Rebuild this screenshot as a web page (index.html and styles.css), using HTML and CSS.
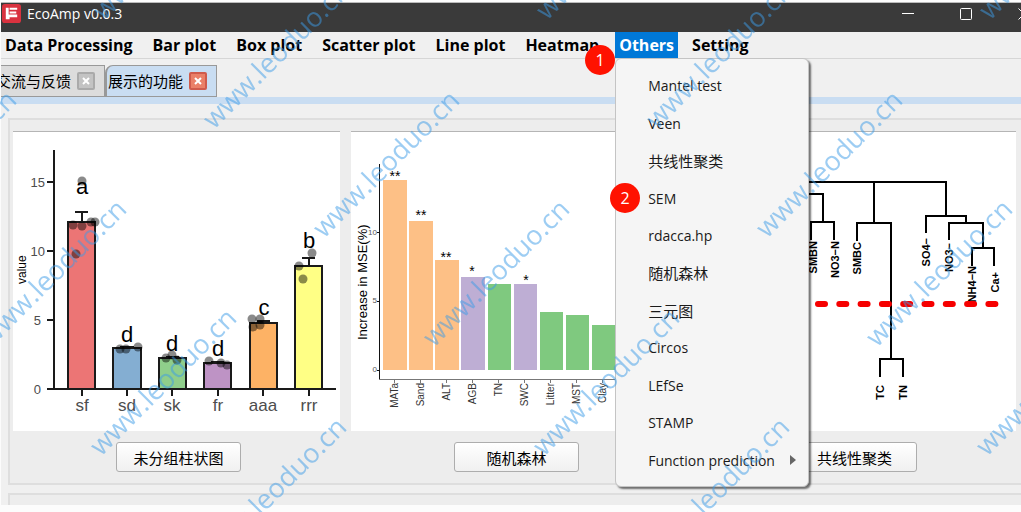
FILE: index.html
```html
<!DOCTYPE html>
<html lang="zh-CN">
<head>
<meta charset="utf-8">
<meta name="viewport" content="width=device-width, initial-scale=1">
<title>EcoAmp v0.0.3</title>
<link rel="stylesheet" href="styles.css">
</head>
<body>
<div class="window">
  <header class="titlebar">
    <svg class="logo" viewBox="0 0 20 20" aria-hidden="true">
      <rect width="20" height="20" rx="3" fill="#d9323f"/>
      <path d="M4 4h3v7h9v3H8v2H4zM8 4h8v2H8zM8 8h7v2H8z" fill="#fff"/>
    </svg>
    <h1 class="title">EcoAmp v0.0.3</h1>
    <div class="controls">
      <button class="control" type="button" aria-label="Minimize"><svg viewBox="0 0 12 12"><path d="M0 5.5h12"/></svg></button>
      <button class="control" type="button" aria-label="Maximize"><svg viewBox="0 0 12 12"><rect x=".5" y=".5" width="11" height="11" rx="1"/></svg></button>
      <button class="control" type="button" aria-label="Close"><svg viewBox="0 0 12 12"><path d="M.5.5l11 11M11.5.5l-11 11"/></svg></button>
    </div>
  </header>

  <nav class="menubar" aria-label="Main menu">
    <button class="menu" type="button">Data Processing</button>
    <button class="menu" type="button">Bar plot</button>
    <button class="menu" type="button">Box plot</button>
    <button class="menu" type="button">Scatter plot</button>
    <button class="menu" type="button">Line plot</button>
    <button class="menu" type="button">Heatmap</button>
    <div class="menu-open">
      <button class="menu active" type="button" aria-haspopup="true" aria-expanded="true">Others</button>
      <span class="badge badge-menu">1</span>
      <div class="dropdown">
        <button class="entry" type="button">Mantel test</button>
        <button class="entry" type="button">Veen</button>
        <button class="entry cjk" type="button">共线性聚类</button>
        <button class="entry" type="button">SEM<span class="badge badge-entry">2</span></button>
        <button class="entry" type="button">rdacca.hp</button>
        <button class="entry cjk" type="button">随机森林</button>
        <button class="entry cjk" type="button">三元图</button>
        <button class="entry" type="button">Circos</button>
        <button class="entry" type="button">LEfSe</button>
        <button class="entry" type="button">STAMP</button>
        <button class="entry" type="button">Function prediction<svg class="arrow" viewBox="0 0 6 10" aria-hidden="true"><path d="M0 0l6 5-6 5z" fill="#666"/></svg></button>
      </div>
    </div>
    <button class="menu" type="button">Setting</button>
  </nav>

  <div class="tabs">
    <div class="tab">
      <button class="tab-label" type="button">交流与反馈</button>
      <button class="tab-close" type="button" aria-label="关闭"><svg viewBox="0 0 8 8"><path d="M1 1l6 6M7 1l-6 6"/></svg></button>
    </div>
    <div class="tab selected">
      <button class="tab-label" type="button">展示的功能</button>
      <button class="tab-close" type="button" aria-label="关闭"><svg viewBox="0 0 8 8"><path d="M1 1l6 6M7 1l-6 6"/></svg></button>
    </div>
  </div>

  <main class="page">
    <section class="group">
      <article class="card">
        <svg class="plot" viewBox="13 132 327 299" role="img" aria-label="未分组柱状图">
          <g stroke="#1a1a1a" stroke-width="2">
            <rect x="68" y="222" width="27" height="167" fill="#ec7575"/>
            <rect x="113" y="348" width="28" height="41" fill="#84aed2"/>
            <rect x="159" y="358" width="27" height="31" fill="#8fce8b"/>
            <rect x="204" y="363" width="27" height="26" fill="#be93c5"/>
            <rect x="250" y="323" width="27" height="66" fill="#fdb265"/>
            <rect x="295" y="266" width="27" height="123" fill="#ffff85"/>
            <path fill="none" d="M75 212h13M82 212v10M120 347h14M166 357h13M211 362h13M257 321h13M302 258h13M309 258v8"/>
            <path fill="none" d="M54 150v240M47 389h289M47 182h7M47 251h7M47 320h7M82 389v7M127 389v7M172 389v7M218 389v7M263 389v7M309 389v7"/>
          </g>
          <g fill="#000" fill-opacity=".46">
            <circle cx="82" cy="181" r="4.5"/><circle cx="91" cy="222" r="4.5"/><circle cx="95" cy="222" r="4.5"/><circle cx="73" cy="225" r="4.5"/><circle cx="82" cy="226" r="4.5"/><circle cx="76" cy="254" r="4.5"/>
            <circle cx="120" cy="349" r="4.5"/><circle cx="126" cy="349" r="4.5"/><circle cx="138" cy="347" r="4.5"/>
            <circle cx="166" cy="358" r="4.5"/><circle cx="172" cy="355" r="4.5"/><circle cx="177" cy="360" r="4.5"/>
            <circle cx="209" cy="361" r="4.5"/><circle cx="221" cy="363" r="4.5"/><circle cx="227" cy="365" r="4.5"/>
            <circle cx="252" cy="319" r="4.5"/><circle cx="260" cy="319" r="4.5"/><circle cx="253" cy="327" r="4.5"/><circle cx="260" cy="325" r="4.5"/>
            <circle cx="312" cy="253" r="4.5"/><circle cx="299" cy="266" r="4.5"/><circle cx="303" cy="279" r="4.5"/>
          </g>
          <g class="letters">
            <text x="82" y="194">a</text><text x="127" y="342">d</text><text x="172" y="351">d</text><text x="218" y="356">d</text><text x="264" y="315">c</text><text x="309" y="248">b</text>
          </g>
          <g class="values">
            <text x="45" y="187">15</text><text x="45" y="256">10</text><text x="41" y="325">5</text><text x="41" y="394">0</text>
          </g>
          <g class="names">
            <text x="82" y="411">sf</text><text x="127" y="411">sd</text><text x="172" y="411">sk</text><text x="218" y="411">fr</text><text x="263" y="411">aaa</text><text x="309" y="411">rrr</text>
          </g>
          <text class="axis-small" transform="translate(26 284) rotate(-90)">value</text>
        </svg>
        <button class="action" type="button">未分组柱状图</button>
      </article>

      <article class="card">
        <svg class="plot" viewBox="351 132 327 299" role="img" aria-label="随机森林">
          <g fill="#fdc086"><rect x="383" y="180" width="24" height="190"/><rect x="409" y="221" width="24" height="149"/><rect x="435" y="260" width="24" height="110"/></g>
          <g fill="#beaed4"><rect x="461" y="277" width="24" height="93"/><rect x="514" y="284" width="23" height="86"/></g>
          <g fill="#7fc97f"><rect x="488" y="284" width="23" height="86"/><rect x="540" y="312" width="23" height="58"/><rect x="566" y="315" width="23" height="55"/><rect x="592" y="325" width="23" height="45"/></g>
          <path d="M379.500 164v216M377 232.500h2M377 301.500h2M377 370.500h2" stroke="#111" fill="none"/>
          <path d="M379 379.500h280M394.500 380v3M420.500 380v3M446.500 380v3M472.500 380v3M498.500 380v3M524.500 380v3M550.500 380v3M576.500 380v3M602.500 380v3" stroke="#777" fill="none"/>
          <g class="stars"><text x="395" y="181">**</text><text x="421" y="220">**</text><text x="446" y="262">**</text><text x="472" y="276">*</text><text x="526" y="285">*</text></g>
          <g class="ticks"><text x="377" y="235">10</text><text x="377" y="303">5</text><text x="377" y="372">0</text></g>
          <g class="species">
            <text transform="translate(398 383) rotate(-90)">MATa</text><text transform="translate(424 383) rotate(-90)">Sand</text><text transform="translate(450 383) rotate(-90)">ALT</text><text transform="translate(476 383) rotate(-90)">AGB</text><text transform="translate(502 383) rotate(-90)">TN</text><text transform="translate(528 383) rotate(-90)">SWC</text><text transform="translate(554 383) rotate(-90)">Litter</text><text transform="translate(580 383) rotate(-90)">MST</text><text transform="translate(606 383) rotate(-90)">Clay</text>
          </g>
          <text class="axis-large" transform="translate(367 340) rotate(-90)">Increase in MSE(%)</text>
        </svg>
        <button class="action" type="button">随机森林</button>
      </article>

      <article class="card">
        <svg class="plot" viewBox="689 132 327 299" role="img" aria-label="共线性聚类">
          <path fill="none" stroke="#000" stroke-width="2" d="M760 182h186v34M780 194h43v28M811 240v-18h23v18M874 182v41M857 241v-18h34v136M880 377v-18h23v18M926 233v-17h40v7M949 240v-17h34v25M972 266v-18h22v18"/>
          <g class="leaves">
            <text transform="translate(817 241) rotate(-90)">SMBN</text><text transform="translate(839 241) rotate(-90)">NO3−N</text><text transform="translate(861 242) rotate(-90)">SMBC</text><text transform="translate(930 238) rotate(-90)">SO4−</text><text transform="translate(953 243) rotate(-90)">NO3−</text><text transform="translate(976 266) rotate(-90)">NH4−N</text><text transform="translate(999 272) rotate(-90)">Ca+</text><text transform="translate(884 385) rotate(-90)">TC</text><text transform="translate(907 385) rotate(-90)">TN</text>
          </g>
          <path d="M818 304h179" fill="none" stroke="#f60000" stroke-width="6" stroke-linecap="round" stroke-dasharray="7 14.300"/>
        </svg>
        <button class="action" type="button">共线性聚类</button>
      </article>
    </section>
    <section class="group next"></section>
  </main>
</div>

<svg class="watermark" aria-hidden="true">
  <text transform="translate(104 21) rotate(-45)">www.leoduo.cn</text>
  <text transform="translate(547 21) rotate(-45)">www.leoduo.cn</text>
  <text transform="translate(990 21) rotate(-45)">www.leoduo.cn</text>
  <text transform="translate(214 130) rotate(-45)">www.leoduo.cn</text>
  <text transform="translate(657 130) rotate(-45)">www.leoduo.cn</text>
  <text transform="translate(-119 239) rotate(-45)">www.leoduo.cn</text>
  <text transform="translate(324 239) rotate(-45)">www.leoduo.cn</text>
  <text transform="translate(767 239) rotate(-45)">www.leoduo.cn</text>
  <text transform="translate(-9 348) rotate(-45)">www.leoduo.cn</text>
  <text transform="translate(434 348) rotate(-45)">www.leoduo.cn</text>
  <text transform="translate(877 348) rotate(-45)">www.leoduo.cn</text>
  <text transform="translate(101 457) rotate(-45)">www.leoduo.cn</text>
  <text transform="translate(544 457) rotate(-45)">www.leoduo.cn</text>
  <text transform="translate(987 457) rotate(-45)">www.leoduo.cn</text>
  <text transform="translate(211 566) rotate(-45)">www.leoduo.cn</text>
  <text transform="translate(654 566) rotate(-45)">www.leoduo.cn</text>
</svg>
</body>
</html>
```
FILE: styles.css
```css
* { box-sizing: border-box; }

body {
  margin: 0;
  background: #fcfcfc;
  color: #000;
  font-family: "Open Sans", "Noto Sans CJK SC", sans-serif;
  font-size: 15px;
}

button {
  margin: 0;
  padding: 0;
  border: 0;
  background: none;
  color: inherit;
  font: inherit;
  white-space: nowrap;
}

.window {
  display: flex;
  flex-direction: column;
  height: 100vh;
  padding: 2px 0 7px 1px;
  overflow: hidden;
}

/* Title bar */
.titlebar {
  display: flex;
  align-items: center;
  flex: none;
  height: 30px;
  padding: 0 0 8px 1px;
  border-top: 1px solid #bbb;
  background: #3a3a3a;
  color: #fff;
}
.logo { width: 19px; height: 19px; }
.title { margin: 0 0 0 6px; font-size: 14px; font-weight: 400; line-height: 20px; }
.controls { display: flex; margin: 0 -32px 0 auto; }
.control { display: grid; place-items: center; width: 58px; height: 20px; }
.control svg { width: 12px; height: 12px; fill: none; stroke: #fff; }

/* Menu bar */
.menubar {
  display: flex;
  flex: none;
  border-bottom: 1px solid #d6d6d6;
  background: #f0f0f0;
}
.menu {
  padding: 0 16px 0 4px;
  font-size: 16px;
  font-weight: 700;
  line-height: 26px;
}
.menu-open { position: relative; margin-right: 10px; }
.menu.active { padding: 0 4px; background: #0078d7; color: #fff; }

.dropdown {
  position: absolute;
  z-index: 2;
  top: 100%;
  left: 0;
  display: flex;
  flex-direction: column;
  width: 194px;
  height: 429px;
  padding: 8px 0 7px;
  border: 1px solid #c4c4c4;
  border-radius: 6px;
  background: #f5f5f5;
  box-shadow: 2px 2px 2px rgba(0, 0, 0, .55);
}
.entry {
  position: relative;
  display: flex;
  flex: 1;
  align-items: center;
  justify-content: space-between;
  padding: 0 12px 0 32px;
  color: #1a1a1a;
  font-size: 14px;
}
.entry.cjk { font-size: 15px; }
.arrow { width: 6px; height: 10px; }

.badge {
  position: absolute;
  z-index: 3;
  width: 30px;
  height: 30px;
  border-radius: 50%;
  background: #ff1200;
  color: #fff;
  font-size: 16px;
  line-height: 30px;
  text-align: center;
}
.badge-menu { top: 13px; left: -30px; }
.badge-entry { top: 4px; left: -6px; }

/* Tabs */
.tabs {
  display: flex;
  flex: none;
  padding-top: 6px;
  overflow: hidden;
  border-bottom: 7px solid #c9ddf2;
  background: #f0f0f0;
}
.tab {
  display: flex;
  align-items: center;
  gap: 6px;
  height: 32px;
  padding: 0 9px 0 3px;
  border: 1px solid #999;
  background: #dcdcdc;
}
.tab:first-child { margin-left: -9px; }
.tab.selected { border-left-width: 2px; border-top-left-radius: 8px; padding-left: 1px; background: #c9ddf2; }
.tab-label { line-height: 30px; }
.tab-close {
  display: grid;
  place-items: center;
  width: 18px;
  height: 18px;
  border: 2px solid #aaa;
  border-radius: 2px;
  background: #c3c3c3;
}
.tab.selected .tab-close { border-color: #cf5b4c; background: #ea8068; }
.tab-close svg { width: 8px; height: 8px; fill: none; stroke: #fff; stroke-width: 2; }

/* Gallery */
.page {
  display: flex;
  flex: 1;
  flex-direction: column;
  gap: 8px;
  min-height: 0;
  padding: 14px 0 0 7px;
  overflow: hidden;
  background: #f0f0f0;
}
.group {
  display: grid;
  flex: none;
  grid-template-columns: repeat(3, 1fr);
  gap: 11px;
  padding: 12px 5px 11px 3px;
  border: 2px solid #dedede;
  border-right: 0;
  background: #ededed;
}
.group.next { flex: 1; padding: 0; border-bottom: 0; }
.card { display: flex; flex-direction: column; align-items: center; gap: 11px; min-width: 0; }
.plot {
  display: block;
  width: 100%;
  height: auto;
  background: #fff;
  box-shadow: 0 -1px #b5b5b5;
  font-family: "Liberation Sans", sans-serif;
}
.action {
  width: 125px;
  height: 30px;
  margin-left: 4px;
  border: 1px solid #adadad;
  border-radius: 3px;
  background: linear-gradient(#fff, #f0f0f0);
}

/* Plot lettering */
.letters { font-size: 22px; text-anchor: middle; }
.values { fill: #4d4d4d; font-size: 13px; text-anchor: end; }
.names { fill: #4d4d4d; font-size: 17px; text-anchor: middle; }
.axis-small { font-size: 12px; }
.axis-large { font-size: 13px; }
.stars { font-size: 14px; text-anchor: middle; }
.ticks { fill: #555; font-size: 8px; text-anchor: end; }
.species { fill: #333; font-size: 10px; text-anchor: end; }
.leaves { font-size: 11px; font-weight: 700; text-anchor: end; }

.watermark {
  position: fixed;
  z-index: 4;
  inset: 0;
  width: 100%;
  height: 100%;
  fill: #3b9be8;
  fill-opacity: .5;
  font-size: 27px;
  pointer-events: none;
}
```
